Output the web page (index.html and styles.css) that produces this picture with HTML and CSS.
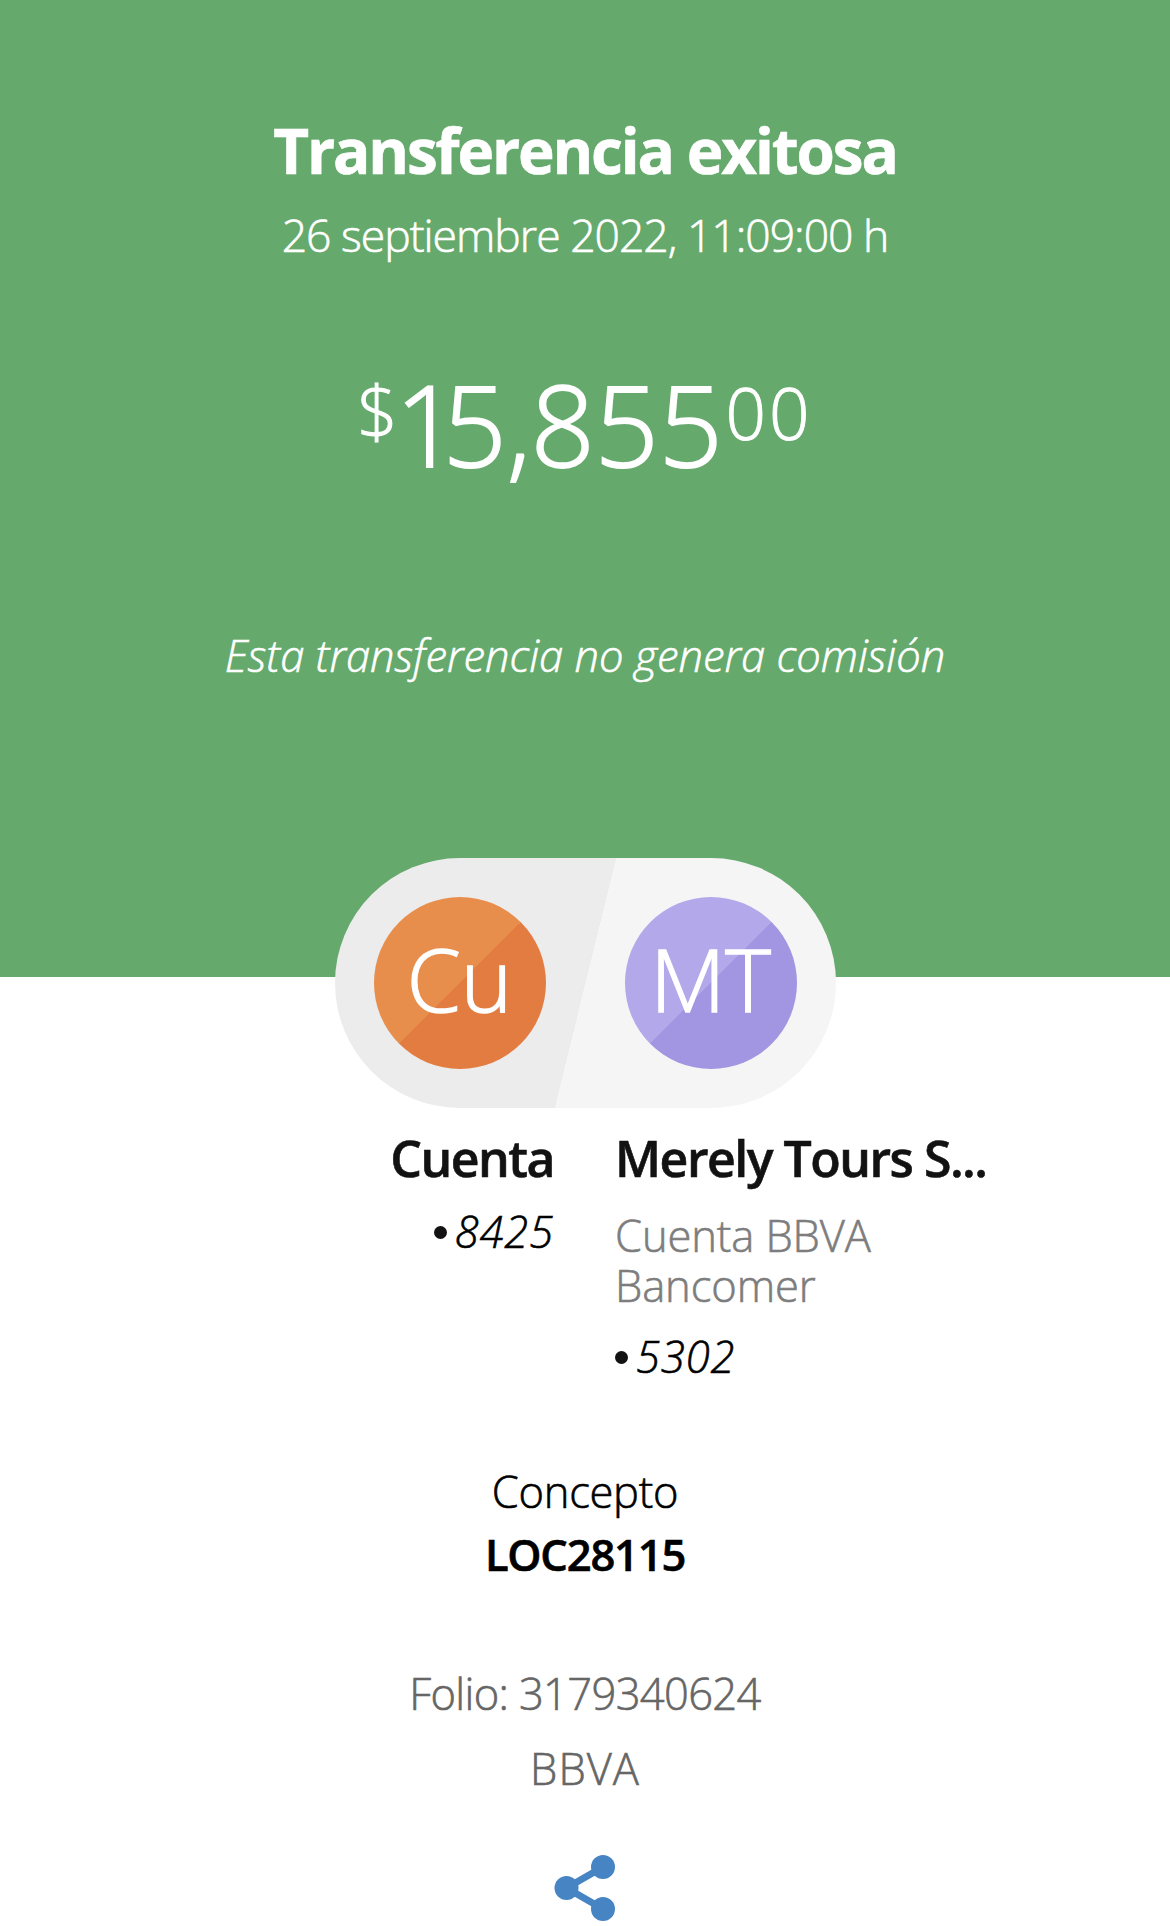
FILE: index.html
```html
<!DOCTYPE html>
<html lang="es">
<head>
  <meta charset="UTF-8" />
  <meta name="viewport" content="width=device-width, initial-scale=1.0"/>
  <title>Transferencia exitosa</title>
  <link rel="stylesheet" href="styles.css">
</head>
<body>

  <!-- ===== Header ===== -->
  <header class="summary">
    <h1>Transferencia exitosa</h1>
    <p class="date">26 septiembre 2022, 11:09:00 h</p>
    <div class="amount">
      <span class="currency">$</span>
      <span class="whole"><span class="tight">1</span>5,855</span>
      <span class="cents">00</span>
    </div>
    <p class="note">Esta transferencia no genera comisión</p>
  </header>

  <!-- ===== Avatars ===== -->
  <div class="pill">
    <div class="avatar avatar-from">Cu</div>
    <div class="avatar avatar-to">MT</div>
  </div>

  <!-- ===== Accounts ===== -->
  <section class="accounts">
    <div class="account from">
      <h2>Cuenta</h2>
      <p class="number"><i class="dot"></i>8425</p>
    </div>
    <div class="account to">
      <h2>Merely Tours S...</h2>
      <p class="bank">Cuenta BBVA<br>Bancomer</p>
      <p class="number"><i class="dot"></i>5302</p>
    </div>
  </section>

  <!-- ===== Details ===== -->
  <section class="concept">
    <p class="label">Concepto</p>
    <p class="value">LOC28115</p>
  </section>

  <footer>
    <p class="folio">Folio: 3179340624</p>
    <p class="brand">BBVA</p>
    <svg class="share" width="62" height="68" viewBox="0 0 62 68">
      <path d="M49 12 12.500 33 49 54" fill="none" stroke="#4784c4" stroke-width="7"/>
      <circle cx="12.500" cy="33" r="12" fill="#4784c4"/>
      <circle cx="49" cy="12" r="12" fill="#4784c4"/>
      <circle cx="49" cy="54" r="12" fill="#4784c4"/>
    </svg>
  </footer>

</body>
</html>
```

FILE: styles.css
```css
* { box-sizing: border-box; }

body {
  margin: 0;
  background: #fff;
  color: #000;
  font-family: 'Open Sans', 'Noto Sans', sans-serif;
  font-size: 43.5px;
  font-weight: 300;
  -webkit-text-stroke: 0.6px currentColor;
}
h1, h2, p { margin: 0; }

/* ===== Header ===== */
.summary {
  height: 977px;
  padding-top: 110px;
  background: #65aa6c;
  color: #fff;
  text-align: center;
}
.summary h1 {
  font-size: 62px;
  font-weight: 700;
  letter-spacing: -2.15px;
  line-height: 80px;
}
.date {
  margin-top: 15px;
  font-size: 44.5px;
  letter-spacing: -1px;
  line-height: 60px;
}
.amount {
  display: flex;
  justify-content: center;
  align-items: flex-start;
  margin-top: 99px;
}
.whole {
  margin: 0 3px 0 -3px;
  font-size: 112px;
  letter-spacing: 0;
  line-height: 120px;
  -webkit-text-stroke-width: 1.8px;
}
.whole .tight { letter-spacing: -16px; }
.currency, .cents {
  margin-top: 12px;
  font-size: 71px;
  line-height: 70px;
  -webkit-text-stroke-width: 1px;
}
.cents {
  margin-top: 14px;
  letter-spacing: 3px;
}
.note {
  margin-top: 142px;
  font-style: italic;
  line-height: 60px;
}

/* ===== Avatars ===== */
.pill {
  display: flex;
  justify-content: space-between;
  align-items: center;
  position: relative;
  width: 501px;
  height: 250px;
  margin: -119px auto 0;
  padding: 0 39px;
  border-radius: 125px;
  background: linear-gradient(103.8deg, #ececec 50%, #f5f5f5 50%);
}
.avatar {
  display: flex;
  justify-content: center;
  width: 172px;
  height: 172px;
  border-radius: 50%;
  color: #fff;
  font-size: 87px;
  line-height: 163px;
  -webkit-text-stroke-width: 1.5px;
}
.avatar-from { background: linear-gradient(135deg, #e88e4d 50%, #e37c41 50%); }
.avatar-to { background: linear-gradient(135deg, #b3a8e9 50%, #a295e1 50%); }

/* ===== Accounts ===== */
.accounts {
  display: grid;
  grid-template-columns: 554px 1fr;
  column-gap: 61px;
  height: 270px;
  margin-top: 20px;
}
.account h2 {
  color: #121212;
  font-size: 50px;
  font-weight: 600;
  letter-spacing: -1.5px;
  line-height: 60px;
}
.number {
  display: flex;
  align-items: center;
  gap: 8px;
  font-style: italic;
  letter-spacing: 0.9px;
  line-height: 50px;
}
.dot {
  width: 13px;
  height: 13px;
  border-radius: 50%;
  background: #121212;
}
.from { text-align: right; }
.from .number {
  justify-content: flex-end;
  margin-top: 19px;
}
.to .number { margin-top: 21px; }
.bank {
  margin-top: 23px;
  color: #7d7d7d;
  letter-spacing: -0.1px;
  line-height: 50px;
}

/* ===== Details ===== */
.concept {
  margin-top: 62px;
  line-height: 63px;
  text-align: center;
}
.label { letter-spacing: -0.3px; }
.value {
  font-weight: 600;
  letter-spacing: -1.2px;
}

footer {
  margin-top: 70px;
  color: #666;
  line-height: 75px;
  text-align: center;
}
.folio { letter-spacing: -0.65px; }
.brand { letter-spacing: 1px; }
.share {
  display: block;
  margin: 49px auto 0;
}
```
